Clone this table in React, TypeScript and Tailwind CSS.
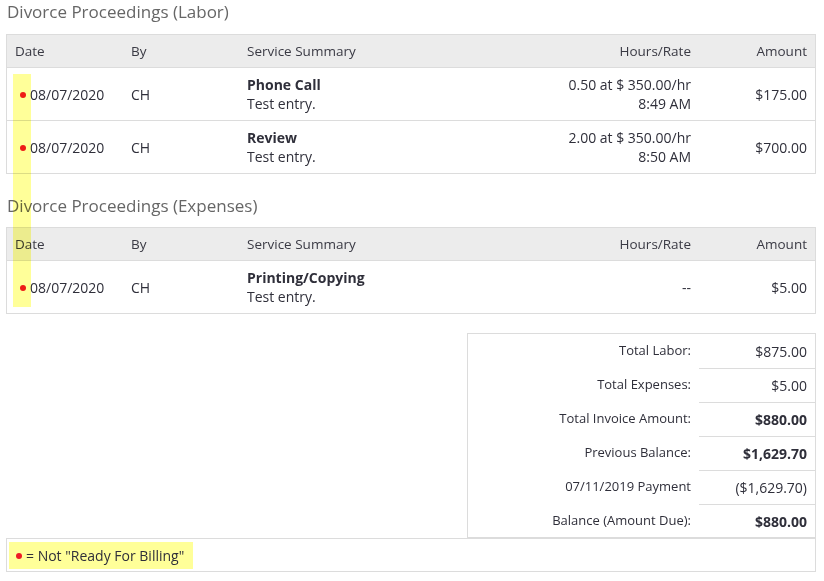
import React from "react";

interface Entry {
  date: string;
  by: string;
  title: string;
  note: string;
  rate: string;
  time?: string;
  amount: string;
}

const labor: Entry[] = [
  { date: "08/07/2020", by: "CH", title: "Phone Call", note: "Test entry.", rate: "0.50 at $ 350.00/hr", time: "8:49 AM", amount: "$175.00" },
  { date: "08/07/2020", by: "CH", title: "Review", note: "Test entry.", rate: "2.00 at $ 350.00/hr", time: "8:50 AM", amount: "$700.00" },
];

const expenses: Entry[] = [
  { date: "08/07/2020", by: "CH", title: "Printing/Copying", note: "Test entry.", rate: "--", amount: "$5.00" },
];

const totals = [
  { label: "Total Labor:", value: "$875.00", bold: false },
  { label: "Total Expenses:", value: "$5.00", bold: false },
  { label: "Total Invoice Amount:", value: "$880.00", bold: true },
  { label: "Previous Balance:", value: "$1,629.70", bold: true },
  { label: "07/11/2019 Payment", value: "($1,629.70)", bold: false },
  { label: "Balance (Amount Due):", value: "$880.00", bold: true },
];

function Dot() {
  return <span className="inline-block w-[6px] h-[6px] rounded-full bg-[#ee1c25] mr-[4px] mt-[2px]" />;
}

function EntryTable({ rows }: { rows: Entry[] }) {
  return (
    <div className="border border-[#dcdcdc]">
      <div className="flex h-[33px] items-center bg-[#ececec] text-[13.5px] text-[#3a3a44] border-b border-[#dcdcdc]">
        <div className="w-[116px] pl-[8px]">Date</div>
        <div className="w-[116px] pl-[8px]">By</div>
        <div className="flex-1 pl-[8px]">Service Summary</div>
        <div className="w-[200px] pr-[9px] text-right">Hours/Rate</div>
        <div className="w-[115px] pr-[8px] text-right">Amount</div>
      </div>
      {rows.map((r, i) => (
        <div
          key={i}
          className={`flex items-center text-[14px] text-[#2f2f3a] leading-[19px] ${i > 0 ? "h-[53px] border-t border-[#dcdcdc]" : "h-[52px]"}`}
        >
          <div className="w-[116px] pl-[13px] flex items-center">
            <Dot />
            {r.date}
          </div>
          <div className="w-[116px] pl-[8px]">{r.by}</div>
          <div className="flex-1 pl-[8px]">
            <div className="font-bold">{r.title}</div>
            <div>{r.note}</div>
          </div>
          <div className="w-[200px] pr-[9px] text-right">
            <div>{r.rate}</div>
            {r.time && <div>{r.time}</div>}
          </div>
          <div className="w-[115px] pr-[8px] text-right">{r.amount}</div>
        </div>
      ))}
    </div>
  );
}

export default function App() {
  return (
    <div className="relative w-[824px] h-[581px] bg-white pl-[6px] pr-[8px] pt-[2px] font-['Open_Sans',sans-serif]">
      <h2 className="text-[17px] leading-[20px] text-[#666] pl-[1px] mb-[12px]">Divorce Proceedings (Labor)</h2>
      <EntryTable rows={labor} />

      <h2 className="text-[17px] leading-[20px] text-[#666] pl-[1px] mt-[22px] mb-[11px]">Divorce Proceedings (Expenses)</h2>
      <EntryTable rows={expenses} />

      <div className="flex justify-end mt-[19px]">
        <div className="w-[349px] border border-[#dcdcdc] text-[13px] text-[#2f2f3a]">
          {totals.map((t, i) => (
            <div key={i} className={`flex ${i === 5 ? "h-[33px]" : "h-[34px]"}`}>
              <div className="flex-1 flex items-center justify-end pr-[8px]">{t.label}</div>
              <div
                className={`w-[116px] flex items-center justify-end pr-[8px] text-[14px] ${i > 0 ? "border-t border-[#dcdcdc]" : ""} ${t.bold ? "font-bold" : ""}`}
              >
                {t.value}
              </div>
            </div>
          ))}
        </div>
      </div>

      <div className="border border-[#dcdcdc] h-[34px] flex items-center pl-[2px]">
        <div className="bg-[#ffff99] h-[27px] flex items-center pl-[7px] pr-[9px] text-[14px] text-[#2f2f3a]">
          <Dot />
          <span>= Not "Ready For Billing"</span>
        </div>
      </div>

      <div className="absolute left-[13px] top-[74px] w-[18px] h-[233px] bg-[#ffff99] mix-blend-multiply pointer-events-none" />
    </div>
  );
}
